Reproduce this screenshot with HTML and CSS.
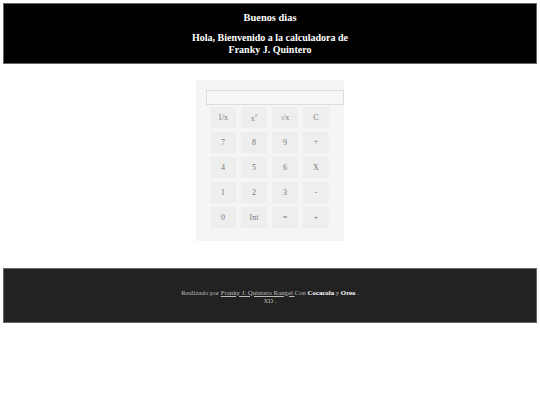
FILE: index.html
```html
<!DOCTYPE html>
<html>
<head>
<meta charset="utf-8">
<link rel="stylesheet" href="styles.css">
</head>
<body>
<header class="top">
  <p class="greet">Buenos dias</p>
  <p class="welcome">Hola, Bienvenido a la calculadora de<br>Franky J. Quintero</p>
</header>
<main class="main">
  <div class="calc">
    <input class="display" type="text">
    <div class="keys">
      <button class="key">1/x</button>
      <button class="key">x<sup>2</sup></button>
      <button class="key">&radic;x</button>
      <button class="key">C</button>
      <button class="key">7</button>
      <button class="key">8</button>
      <button class="key">9</button>
      <button class="key">&divide;</button>
      <button class="key">4</button>
      <button class="key">5</button>
      <button class="key">6</button>
      <button class="key">X</button>
      <button class="key">1</button>
      <button class="key">2</button>
      <button class="key">3</button>
      <button class="key">-</button>
      <button class="key">0</button>
      <button class="key">Int</button>
      <button class="key">=</button>
      <button class="key">+</button>
    </div>
  </div>
</main>
<footer class="foot">
  <p class="credit">Realizado por <a class="author" href="#">Franky J. Quintero Rangel </a>Con <b class="brand">Cocacola</b> y <b class="brand">Oreo</b> .<br>XD .</p>
</footer>
</body>
</html>
```
FILE: styles.css
```css
html, body {
  margin: 0;
  padding: 0;
  background: #fff;
  font-family: "Liberation Serif", serif;
}
body {
  padding: 3px;
}
.top {
  background: #000;
  border: 1px solid #666;
  height: 51px;
  color: #fff;
  text-align: center;
  font-weight: bold;
  font-size: 10.4px;
  display: flex;
  flex-direction: column;
  align-items: center;
  padding-top: 8px;
  box-sizing: content-box;
}
.top p { margin: 0; line-height: 12px; }
.greet { margin-bottom: 8px !important; }
.welcome { font-size: 10px; }
.main {
  display: flex;
  justify-content: center;
  padding-top: 16px;
  padding-bottom: 27px;
}
.calc {
  background: #f5f5f5;
  width: 148px;
  height: 161px;
  padding: 10px 0 0 10px;
  box-sizing: border-box;
}
.display {
  display: block;
  width: 138px;
  height: 15px;
  box-sizing: border-box;
  border: 1px solid #ddd;
  background: #f7f7f7;
  margin: 0 0 2px 0;
  padding: 0;
}
.keys {
  display: grid;
  grid-template-columns: repeat(4, 26px);
  grid-auto-rows: 21px;
  column-gap: 5px;
  row-gap: 4px;
  padding-left: 4px;
}
.key {
  border: none;
  background: #eee;
  color: #777;
  font-family: "Liberation Serif", serif;
  font-size: 8px;
  padding: 0;
  margin: 0;
}
.key sup { font-size: 5px; }
.foot {
  background: #222;
  border: 1px solid #666;
  height: 53px;
  display: flex;
  align-items: center;
  justify-content: center;
  text-align: center;
}
.credit {
  margin: 0;
  color: #bbb;
  font-size: 6.8px;
  line-height: 8px;
  padding-top: 2px;
}
.author { color: #bbb; }
.brand { color: #fff; }
```
